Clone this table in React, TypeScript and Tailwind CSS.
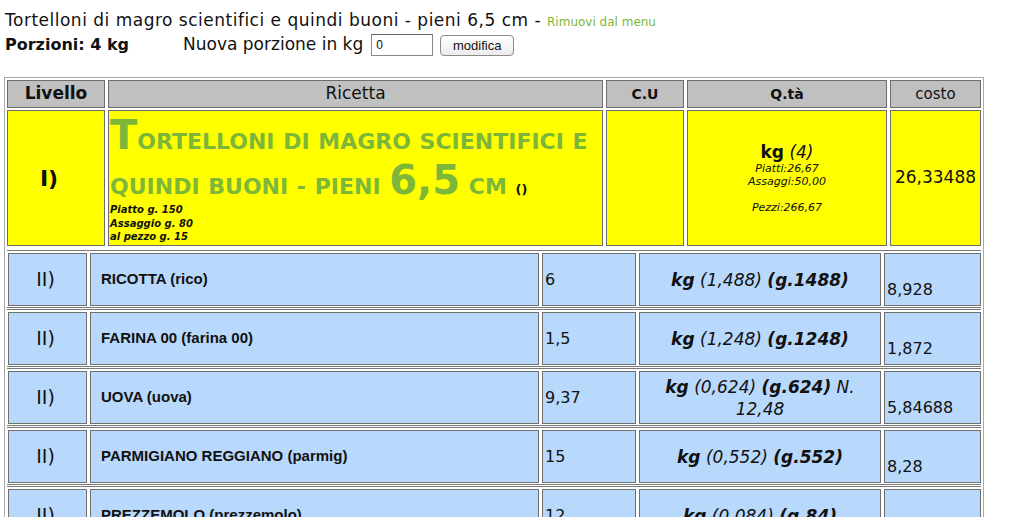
const ff = "font-['DejaVu_Sans',sans-serif]";

interface Ingrediente {
  nome: string;
  cu: string;
  kg: string;
  g: string;
  extra?: string;
  costo: string;
}

const ingredienti: Ingrediente[] = [
  { nome: "RICOTTA (rico)", cu: "6", kg: "1,488", g: "1488", costo: "8,928" },
  { nome: "FARINA 00 (farina 00)", cu: "1,5", kg: "1,248", g: "1248", costo: "1,872" },
  { nome: "UOVA (uova)", cu: "9,37", kg: "0,624", g: "624", extra: " N. 12,48", costo: "5,84688" },
  { nome: "PARMIGIANO REGGIANO (parmig)", cu: "15", kg: "0,552", g: "552", costo: "8,28" },
  { nome: "PREZZEMOLO (prezzemolo)", cu: "12", kg: "0,084", g: "84", costo: "1,008" },
  { nome: "SALE (sale)", cu: "0,4", kg: "0,020", g: "20", costo: "0,008" },
];

function RigaIngrediente({ r }: { r: Ingrediente }) {
  return (
    <div className="mt-[1px] border-y border-[#777] pt-[2px] pb-[1px] pl-[1px]">
      <div className="flex gap-[3px] h-[53px] text-[#111]">
        <div className="w-[79px] flex items-center justify-center pr-[4px] border border-[#707070] bg-[#b8d8fc] text-[19px]">
          II)
        </div>
        <div className="w-[449px] flex items-center border border-[#707070] bg-[#b8d8fc] pl-[10px] font-['Liberation_Sans',sans-serif] font-bold text-[15px]">
          {r.nome}
        </div>
        <div className="w-[94px] flex items-center border border-[#707070] bg-[#b8d8fc] pl-[2px] text-[16px]">
          {r.cu}
        </div>
        <div className="w-[242px] flex items-center justify-center text-center border border-[#707070] bg-[#b8d8fc] px-[8px] text-[17px] italic leading-[22px]">
          <span>
            <b>kg</b> ({r.kg}) <b>(g.{r.g})</b>
            {r.extra}
          </span>
        </div>
        <div className="w-[97px] flex items-end border border-[#707070] bg-[#b8d8fc] pl-[2px] pb-[3px] text-[16px]">
          {r.costo}
        </div>
      </div>
    </div>
  );
}

export default function App() {
  return (
    <div className={`${ff} bg-white text-[#111] min-h-screen`}>
      {/* Intestazione */}
      <div className="h-[30px] pl-[5px] pt-[10px] text-[17px] leading-[20px] tracking-[0.5px] whitespace-nowrap">
        Tortelloni di magro scientifici e quindi buoni - pieni 6,5 cm -{" "}
        <span className="text-[12px] leading-none tracking-normal text-[#7db73a]">Rimuovi dal menu</span>
      </div>
      <div className="mt-[2px] pl-[5px] flex items-center h-[26px]">
        <b className="text-[16px]">Porzioni: 4 kg</b>
        <span className="ml-[54px] text-[17px]">Nuova porzione in kg</span>
        <input
          defaultValue="0"
          className="ml-[8px] w-[62px] h-[22px] border border-[#888] border-t-[#666] px-[4px] text-[12px] font-['Liberation_Sans',sans-serif] bg-white"
        />
        <button className="ml-[7px] w-[74px] h-[21px] rounded-[4px] border border-[#8a8a8a] bg-gradient-to-b from-white to-[#ececec] text-[13px] font-['Liberation_Sans',sans-serif] leading-none">
          modifica
        </button>
      </div>

      {/* Tabella */}
      <div className="mt-[19px] ml-[4px] w-[980px] border border-[#a8a8a8] p-[2px]">
        <div className="flex gap-[3px] h-[28px]">
          <div className="w-[98px] flex items-center justify-center border border-[#6e6e6e] bg-[#c0c0c0] font-bold text-[17px]">
            Livello
          </div>
          <div className="w-[495px] flex items-center justify-center border border-[#6e6e6e] bg-[#c0c0c0] text-[17px]">
            Ricetta
          </div>
          <div className="w-[78px] flex items-center justify-center border border-[#6e6e6e] bg-[#c0c0c0] font-bold text-[14px]">
            C.U
          </div>
          <div className="w-[200px] flex items-center justify-center border border-[#6e6e6e] bg-[#c0c0c0] font-bold text-[14px]">
            Q.tà
          </div>
          <div className="w-[91px] flex items-center justify-center border border-[#6e6e6e] bg-[#c0c0c0] text-[15px]">
            costo
          </div>
        </div>

        <div className="mt-[2px] flex gap-[3px] h-[136px]">
          <div className="w-[98px] flex items-center justify-center pr-[14px] border border-[#6e6e6e] bg-[#ffff00] font-bold text-[22px]">
            I)
          </div>
          <div className="w-[495px] overflow-hidden border border-[#6e6e6e] bg-[#ffff00] pl-[1px] pt-[2px]">
            <div className="text-[40px] text-[#7db73a] font-bold leading-[45px] [word-spacing:1px]">
              <span>T</span>
              <span className="text-[22px] leading-[20px]">ORTELLONI DI MAGRO SCIENTIFICI E QUINDI BUONI - PIENI </span>
              <span>6,5</span>
              <span className="text-[22px] leading-[20px]"> CM </span>
              <span className="text-[13px] leading-[14px] text-[#111]">()</span>
            </div>
            <div className="text-[10px] italic font-bold leading-[13.5px]">
              <div>Piatto g. 150</div>
              <div>Assaggio g. 80</div>
              <div>al pezzo g. 15</div>
            </div>
          </div>
          <div className="w-[78px] border border-[#6e6e6e] bg-[#ffff00]"></div>
          <div className="w-[200px] flex flex-col items-center justify-center border border-[#6e6e6e] bg-[#ffff00] text-center">
            <div className="text-[17px] leading-[20px]">
              <b>kg</b> <i>(4)</i>
            </div>
            <div className="text-[11px] italic leading-[13px]">
              <div>Piatti:26,67</div>
              <div>Assaggi:50,00</div>
              <div>&nbsp;</div>
              <div>Pezzi:266,67</div>
            </div>
          </div>
          <div className="w-[91px] flex items-center justify-center border border-[#6e6e6e] bg-[#ffff00] text-[17px]">
            26,33488
          </div>
        </div>

        <div className="mt-[4px]">
          {ingredienti.map((r) => (
            <RigaIngrediente key={r.nome} r={r} />
          ))}
        </div>
      </div>
    </div>
  );
}
